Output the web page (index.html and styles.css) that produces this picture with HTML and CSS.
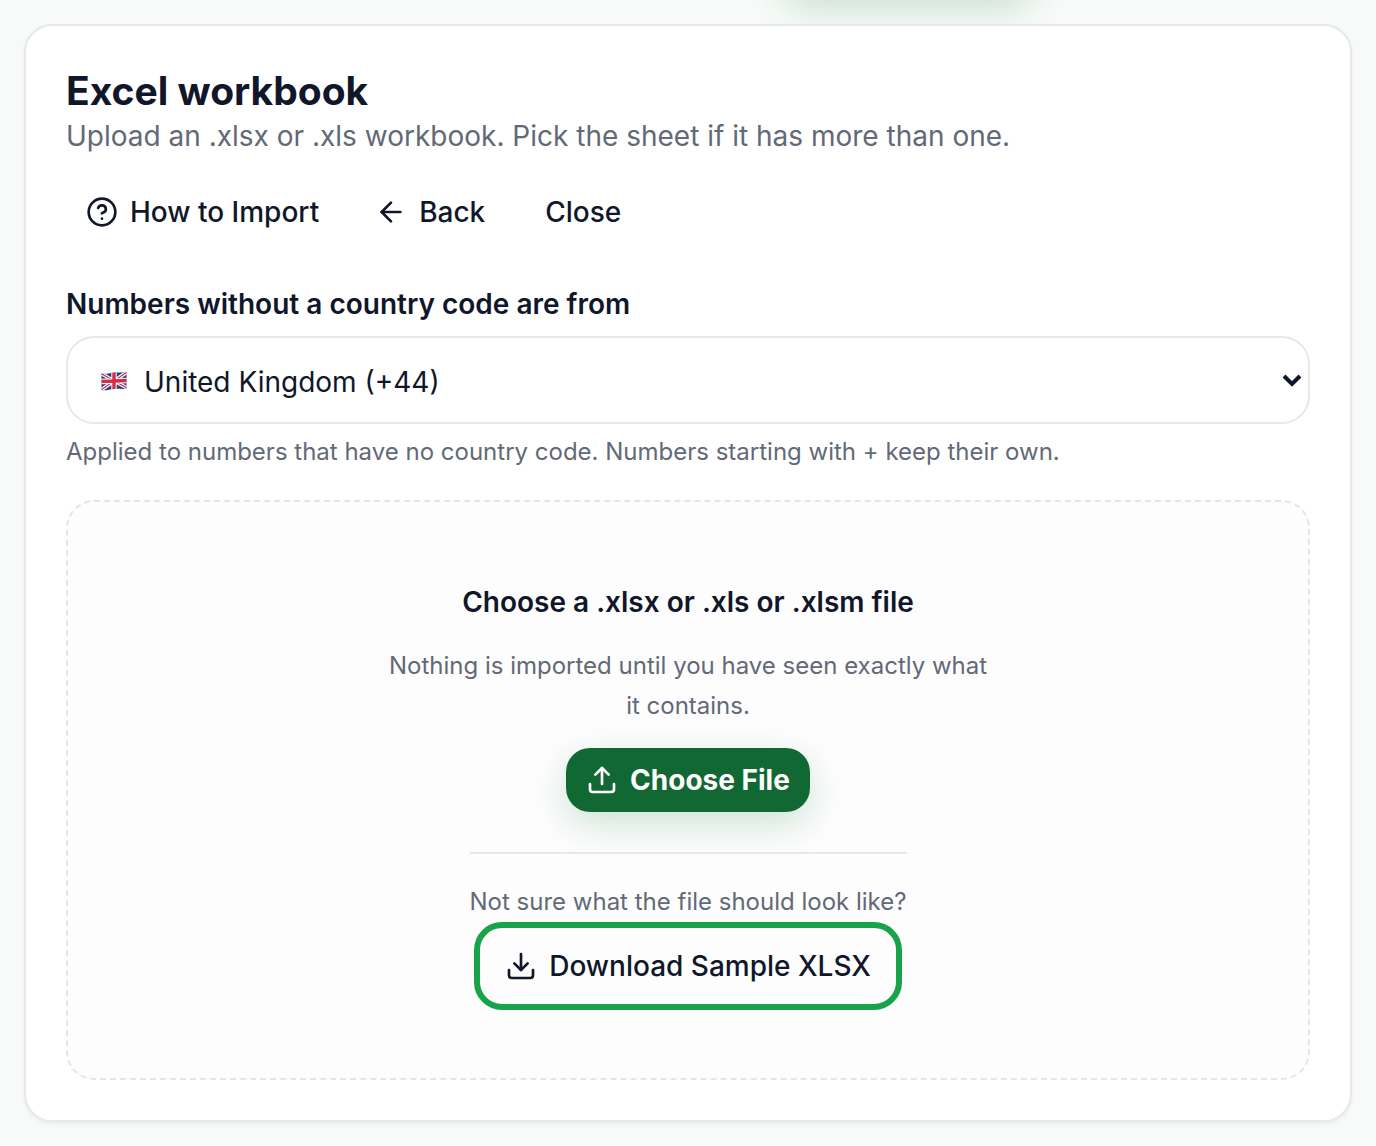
FILE: index.html
```html
<!DOCTYPE html>
<html lang="en">
<head>
  <meta charset="UTF-8">
  <meta name="viewport" content="width=device-width, initial-scale=1.0">
  <title>Import contacts</title>
  <link rel="stylesheet" href="styles.css">
</head>
<body>
  <main class="card">
    <header>
      <h1>Excel workbook</h1>
      <p class="subtitle">Upload an .xlsx or .xls workbook. Pick the sheet if it has more than one.</p>
    </header>

    <div class="actions">
      <button type="button" class="btn">
        <svg class="icon" viewBox="0 0 24 24" aria-hidden="true">
          <circle cx="12" cy="12" r="10"/>
          <path d="M9.09 9a3 3 0 0 1 5.83 1c0 2-3 3-3 3"/>
          <path d="M12 17h.01"/>
        </svg>
        How to Import
      </button>
      <button type="button" class="btn">
        <svg class="icon" viewBox="0 0 24 24" aria-hidden="true">
          <path d="m12 19-7-7 7-7"/>
          <path d="M19 12H5"/>
        </svg>
        Back
      </button>
      <button type="button" class="btn btn-text">Close</button>
    </div>

    <div class="field">
      <label for="country">Numbers without a country code are from</label>
      <div class="select-wrap">
        <svg class="flag" viewBox="0 0 26 20" aria-hidden="true">
          <clipPath id="flag-shape">
            <path d="M.5 2.500C6 3.500 9 1.800 14 1.500S22 1.800 25.500.800V17.500C21 18.600 18 17.500 13 17.900S5 20 .5 19Z"/>
          </clipPath>
          <g clip-path="url(#flag-shape)">
            <path fill="#26417f" d="M0 0h26v20H0z"/>
            <path stroke="#fff" stroke-width="3.600" d="M0 2.500 26 17M0 19 26 1"/>
            <path stroke="#d02f45" stroke-width="1.300" d="M0 2.500 26 17M0 19 26 1"/>
            <path stroke="#fff" stroke-width="5.400" d="M13 0v20M0 10.500 26 9.500"/>
            <path stroke="#d02f45" stroke-width="3.400" d="M13 0v20M0 10.500 26 9.500"/>
          </g>
        </svg>
        <select id="country">
          <option value="GB">United Kingdom (+44)</option>
        </select>
        <svg class="chevron" viewBox="0 0 20 14" aria-hidden="true">
          <path d="m2 3 8 8 8-8"/>
        </svg>
      </div>
      <p class="hint">Applied to numbers that have no country code. Numbers starting with + keep their own.</p>
    </div>

    <section class="dropzone">
      <h2>Choose a .xlsx or .xls or .xlsm file</h2>
      <p class="note">Nothing is imported until you have seen exactly what it contains.</p>
      <button type="button" class="btn btn-primary">
        <svg class="icon" viewBox="0 0 24 24" aria-hidden="true">
          <path d="M12 3v12"/>
          <path d="m17 8-5-5-5 5"/>
          <path d="M21 15v4a2 2 0 0 1-2 2H5a2 2 0 0 1-2-2v-4"/>
        </svg>
        Choose File
      </button>
      <div class="sample">
        <p>Not sure what the file should look like?</p>
        <button type="button" class="btn btn-sample">
          <svg class="icon" viewBox="0 0 24 24" aria-hidden="true">
            <path d="M12 15V3"/>
            <path d="m7 10 5 5 5-5"/>
            <path d="M21 15v4a2 2 0 0 1-2 2H5a2 2 0 0 1-2-2v-4"/>
          </svg>
          Download Sample XLSX
        </button>
      </div>
    </section>
  </main>
</body>
</html>
```

FILE: styles.css
```css
* {
  box-sizing: border-box;
}

body {
  font-family: 'Inter', Arial, sans-serif;
  font-size: 28px;
  line-height: 40px;
  background: #f7faf8;
  color: #10172a;
  margin: 0;
  padding: 24px;
  overflow-x: hidden;
}

body::before {
  content: '';
  position: absolute;
  top: -68px;
  right: 344px;
  width: 248px;
  height: 64px;
  border-radius: 24px;
  box-shadow: 0 12px 36px rgba(20, 120, 60, 0.2);
}

h1, h2, p {
  margin: 0;
}

.card {
  position: relative;
  background: #fff;
  border: 2px solid #e6e9e8;
  border-radius: 28px;
  padding: 40px;
  box-shadow: 0 2px 4px rgba(16, 23, 42, 0.06);
}

h1 {
  font-size: 39px;
  line-height: 50px;
  font-weight: 700;
}

.subtitle, .hint, .note, .sample p {
  color: #626977;
}

.actions {
  display: flex;
  flex-wrap: wrap;
  gap: 16px;
  margin-top: 24px;
}

.btn {
  display: inline-flex;
  align-items: center;
  justify-content: center;
  gap: 12px;
  height: 64px;
  padding: 0 20px;
  border: none;
  border-radius: 24px;
  background: none;
  color: inherit;
  font: inherit;
  font-weight: 500;
  cursor: pointer;
}

.btn-text {
  padding: 0 24px;
}

.icon {
  width: 32px;
  height: 32px;
  flex-shrink: 0;
  fill: none;
  stroke: currentColor;
  stroke-width: 2;
  stroke-linecap: round;
  stroke-linejoin: round;
}

.field {
  margin-top: 40px;
}

.field label {
  display: block;
  font-weight: 600;
}

.select-wrap {
  position: relative;
  margin: 12px 0;
}

.select-wrap select {
  display: block;
  appearance: none;
  width: 100%;
  height: 88px;
  padding: 4px 56px 0 76px;
  border: 2px solid #e6e9e8;
  border-radius: 28px;
  background: #fff;
  color: inherit;
  font: inherit;
}

/* flag and arrow lie over the select */
.flag, .chevron {
  position: absolute;
  top: 0;
  bottom: 0;
  margin: auto 0;
  pointer-events: none;
}

.flag {
  top: 2px;
  left: 35px;
  width: 26px;
  height: 20px;
}

.chevron {
  right: 8px;
  width: 20px;
  height: 14px;
  fill: none;
  stroke: currentColor;
  stroke-width: 4;
}

.hint {
  font-size: 24px;
  line-height: 32px;
}

.dropzone {
  display: flex;
  flex-direction: column;
  align-items: center;
  margin-top: 32px;
  padding: 80px 40px 68px;
  border: 2px dashed #e4e6e5;
  border-radius: 28px;
  background: #fdfdfd;
  text-align: center;
}

h2 {
  font-size: 28px;
  line-height: 40px;
  font-weight: 600;
}

.note {
  max-width: 608px;
  margin: 24px 0 22px;
  font-size: 24px;
}

.btn-primary {
  background: #126832;
  color: #fff;
  font-weight: 700;
  box-shadow: 0 12px 36px rgba(20, 120, 60, 0.2);
}

.sample {
  margin-top: 40px;
  padding-top: 28px;
  border-top: 2px solid #e6e9e8;
}

.sample p {
  font-size: 24px;
}

.btn-sample {
  height: 88px;
  padding: 0 25px;
  border: 6px solid #18a34b;
  border-radius: 28px;
}
```
